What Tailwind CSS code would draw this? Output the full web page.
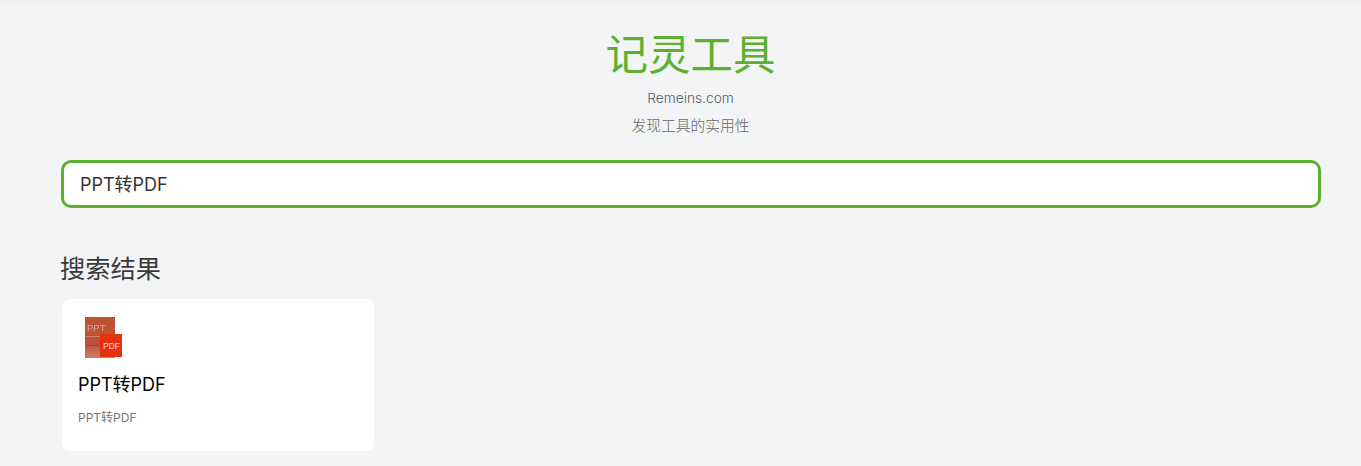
<!DOCTYPE html>
<html lang="zh">
<head>
  <meta charset="UTF-8" />
  <title>记灵工具</title>
  <script src="https://cdn.jsdelivr.net/npm/@tailwindcss/browser@4"></script>
</head>
<body class="min-h-screen overflow-hidden bg-[#f3f4f6] font-['Inter','Noto_Sans_CJK_SC',sans-serif]">
  <div class="h-[3px] bg-[#eeeff1]"></div>
  <header class="flex flex-col items-center pt-[22px] pl-[20px]">
    <h1 class="text-[42.5px] leading-[60px] text-[#5bb02f]">记灵工具</h1>
    <p class="mt-[3px] text-[13.75px] font-light leading-5 text-[#555b66]">Remeins.com</p>
    <p class="mt-2 text-[14.75px] font-light leading-5 text-[#666]">发现工具的实用性</p>
  </header>
  <main class="pl-[61px] pr-[40px]">
    <input value="PPT转PDF" class="mt-[24px] block h-[48px] w-[1260px] rounded-[10px] border-[3px] border-[#5bb02f] bg-white px-4 pb-[2px] text-lg text-[#333] outline-none" />
    <h2 class="mt-[44px] -ml-px text-[25.25px] leading-[34px] text-[#3a3a3a]">搜索结果</h2>
    <div class="mt-[13px] ml-px h-[152px] w-[312px] rounded-lg bg-white px-4 pt-[17px]">
      <svg class="ml-[6px] block blur-[0.4px]" width="40" height="44" viewBox="0 0 40 44">
        <defs>
          <linearGradient id="lower" x1="0" y1="0" x2="0" y2="1">
            <stop offset="0" stop-color="#bf573e" />
            <stop offset="1" stop-color="#d27f69" />
          </linearGradient>
        </defs>
        <rect x="1" y="1" width="30" height="41" fill="#bd5235" />
        <rect x="1" y="21" width="30" height="8" fill="#b9523a" />
        <rect x="1" y="30" width="30" height="12" fill="url(#lower)" />
        <rect x="1" y="20" width="30" height="1" fill="#d3826c" />
        <rect x="1" y="29" width="30" height="1" fill="#a8432e" />
        <text x="3" y="15" font-family="Liberation Sans" font-size="9.5" fill="#dfa797">PPT</text>
        <rect x="16" y="18" width="22" height="23" fill="#e6310f" />
        <text x="19" y="33" font-family="Liberation Sans" font-size="8.5" fill="#fbd5cb">PDF</text>
      </svg>
      <h3 class="mt-[11px] text-lg leading-7 text-black">PPT转PDF</h3>
      <p class="mt-[9px] text-xs leading-5 text-[#777]">PPT转PDF</p>
    </div>
  </main>
</body>
</html>
